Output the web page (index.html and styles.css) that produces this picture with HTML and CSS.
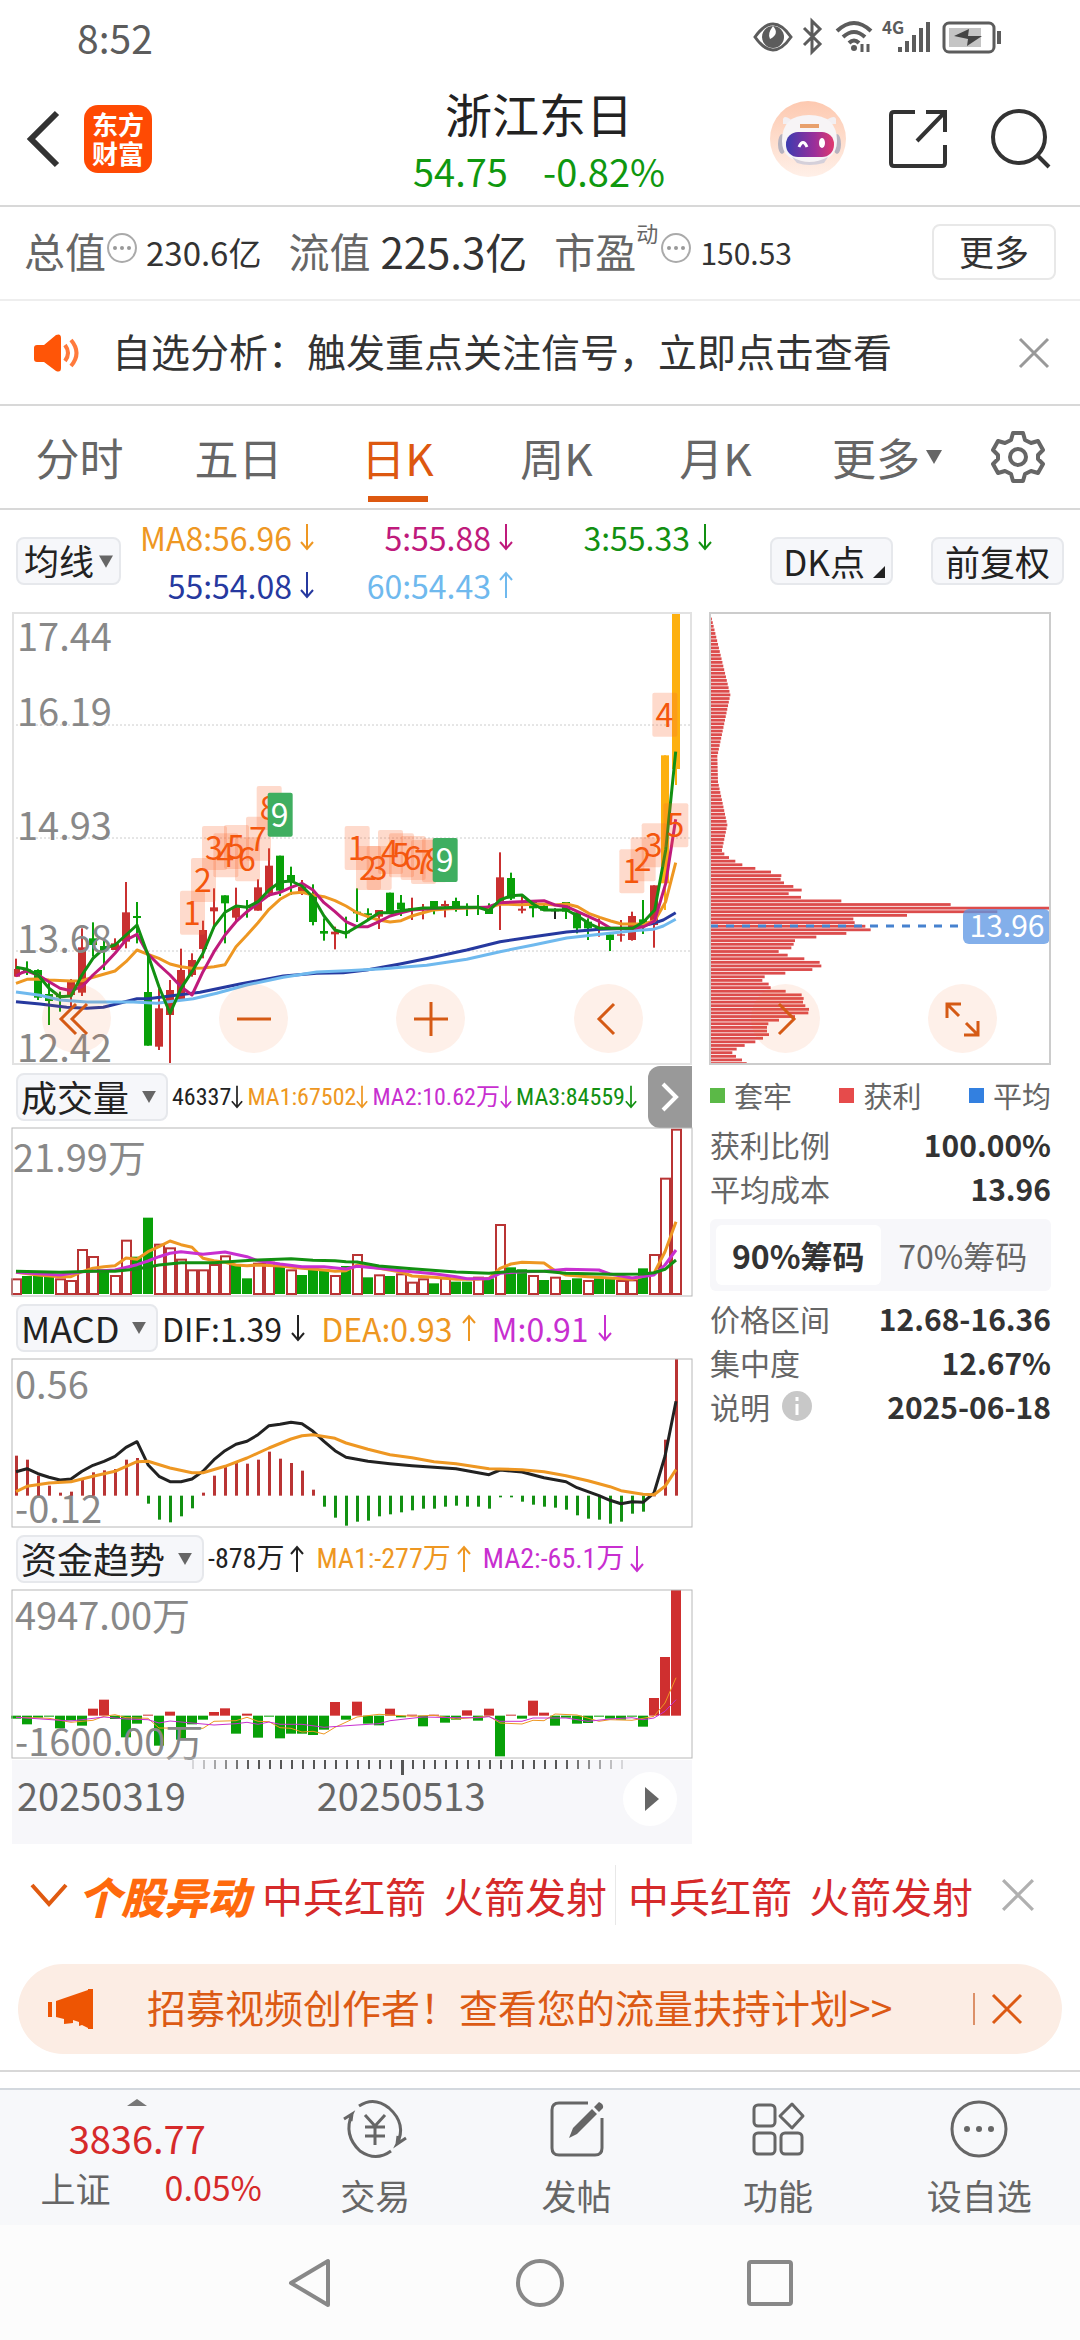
FILE: index.html
```html
<!DOCTYPE html>
<html lang="zh-CN">
<head>
<meta charset="utf-8">
<meta name="viewport" content="width=device-width">
<title>浙江东日</title>
<link rel="stylesheet" href="styles.css">
</head>
<body>
<svg class="defs" aria-hidden="true">
  <symbol id="down" viewBox="0 0 14 28"><path d="M7 1V26M1 19L7 26L13 19" fill="none" stroke="currentColor" stroke-width="2"/></symbol>
  <symbol id="up" viewBox="0 0 14 28"><path d="M7 27V2M1 9L7 2L13 9" fill="none" stroke="currentColor" stroke-width="2"/></symbol>
  <symbol id="cross" viewBox="0 0 32 32"><path d="M2 2L30 30M30 2L2 30" fill="none" stroke="currentColor" stroke-width="3"/></symbol>
  <symbol id="caret" viewBox="0 0 16 14"><path d="M0 0H16L8 14Z" fill="#666"/></symbol>
  <symbol id="more-dots" viewBox="0 0 32 32"><circle cx="16" cy="16" r="14" fill="none" stroke="#aaa" stroke-width="2"/><circle cx="9" cy="16" r="2" fill="#999"/><circle cx="16" cy="16" r="2" fill="#999"/><circle cx="23" cy="16" r="2" fill="#999"/></symbol>
</svg>

<div class="status">
  <span class="clock">8:52</span>
  <svg class="status-icons" width="252" height="36" viewBox="0 0 252 36">
    <g fill="none" stroke="#5c5c5c" stroke-width="3">
      <path d="M2 18Q20 -8 38 18Q20 44 2 18Z"/>
      <path d="M51 9L67 25L59 33V2L67 10L51 26"/>
      <path d="M84 12Q101 -4 118 12M90 18Q101 8 112 18M96 24Q101 19 106 24" stroke-width="4"/>
      <rect x="191" y="4" width="50" height="29" rx="5"/>
      <path d="M246 12V25" stroke-width="4"/>
    </g>
    <circle cx="20" cy="18" r="11" fill="#5c5c5c"/><path d="M20 7Q27 15 17 20Q14 15 20 7Z" fill="#fff"/>
    <circle cx="101" cy="29" r="3" fill="#5c5c5c"/><path d="M109 25V33M115 25V33" stroke="#5c5c5c" stroke-width="3"/>
    <text x="129" y="15" font-size="17" font-weight="700" fill="#5c5c5c">4G</text>
    <path d="M147 33V28M154 33V22M161 33V16M168 33V9M175 33V3" stroke="#5c5c5c" stroke-width="4"/>
    <rect x="196" y="9" width="32" height="19" fill="#c4c4c4"/><path d="M201 17L216 10L215 17H229L214 27L215 20Z" fill="#444"/>
  </svg>
</div>

<header class="header">
  <div class="side">
    <button class="plain" aria-label="返回"><svg width="34" height="58" viewBox="0 0 34 58"><path d="M31 3L5 29L31 55" fill="none" stroke="#333" stroke-width="6"/></svg></button>
    <a class="logo" href="#"><span>东方</span><span>财富</span></a>
  </div>
  <div class="title">
    <h1>浙江东日</h1>
    <p class="quote"><span>54.75</span><span>-0.82%</span></p>
  </div>
  <div class="side tools">
    <button class="plain" aria-label="助手"><svg width="76" height="76" viewBox="0 0 76 76">
      <defs>
        <linearGradient id="peach" x2="0" y2="1"><stop offset="0" stop-color="#fdc9b0"/><stop offset="1" stop-color="#fff0e8"/></linearGradient>
        <linearGradient id="visor"><stop offset="0" stop-color="#3c3bb0"/><stop offset=".6" stop-color="#9b2f9a"/><stop offset="1" stop-color="#e03a6e"/></linearGradient>
      </defs>
      <circle cx="38" cy="38" r="38" fill="url(#peach)"/>
      <path d="M13 18Q14 14 20 18L26 23H13Z" fill="#f3eff2"/><path d="M66 18Q65 14 58 18L52 23H66Z" fill="#f3eff2"/>
      <ellipse cx="12" cy="43" rx="4" ry="10" fill="#b7b3bf"/><ellipse cx="67" cy="43" rx="4" ry="10" fill="#b7b3bf"/>
      <path d="M12 40Q12 14 39 14Q67 14 67 40Q67 61 39 61Q12 61 12 40Z" fill="#f7f4f6"/>
      <path d="M22 56Q39 66 58 56L54 62Q39 66 27 62Z" fill="#d5d0da"/>
      <path d="M30 25H49" stroke="#e8a06c" stroke-width="4"/>
      <rect x="16" y="31" width="48" height="25" rx="12" fill="url(#visor)"/>
      <path d="M29 46Q33 37 37 46" fill="none" stroke="#fff" stroke-width="3"/><ellipse cx="52" cy="42" rx="3" ry="5" fill="#fff"/>
    </svg></button>
    <button class="plain" aria-label="分享"><svg width="60" height="60" viewBox="0 0 60 60"><path d="M27 3H6Q3 3 3 6V54Q3 57 6 57H54Q57 57 57 54V36M38 3H57V23M57 3L29 32" fill="none" stroke="#333" stroke-width="4"/></svg></button>
    <button class="plain" aria-label="搜索"><svg width="62" height="62" viewBox="0 0 62 62"><circle cx="29" cy="29" r="26" fill="none" stroke="#333" stroke-width="4"/><path d="M47 47L59 59" stroke="#333" stroke-width="4"/></svg></button>
  </div>
</header>

<section class="metrics">
  <span class="key">总值</span><svg class="dots" width="32" height="32"><use href="#more-dots"/></svg><span class="val">230.6亿</span>
  <span class="key second">流值</span><span class="val big">225.3亿</span>
  <span class="key third">市盈</span><sup>动</sup><svg class="dots" width="32" height="32"><use href="#more-dots"/></svg><span class="val pe">150.53</span>
  <button class="more">更多</button>
</section>

<section class="notice">
  <svg width="46" height="38" viewBox="0 0 46 38"><path d="M3 11H10L22 1Q27 -1 27 4V34Q27 39 22 37L10 28H3Q0 28 0 25V14Q0 11 3 11Z" fill="#ff5507"/><path d="M31 11Q37 19 31 27M37 6Q48 19 37 32" fill="none" stroke="#ff7a3c" stroke-width="4"/></svg>
  <p>自选分析：触发重点关注信号，立即点击查看</p>
  <button class="plain" aria-label="关闭提示"><svg width="32" height="32"><use href="#cross"/></svg></button>
</section>

<nav class="tabs">
  <button>分时</button><button>五日</button><button class="active">日K</button><button>周K</button><button>月K</button>
  <button>更多<svg width="16" height="14"><use href="#caret"/></svg></button>
  <button class="gear" aria-label="设置"><svg width="54" height="54" viewBox="0 0 54 54"><path d="M22 3H32L34 10L40 13L47 11L52 20L47 25V29L52 34L47 43L40 41L34 44L32 51H22L20 44L14 41L7 43L2 34L7 29V25L2 20L7 11L14 13L20 10Z" fill="none" stroke="#666" stroke-width="4" stroke-linejoin="round"/><circle cx="27" cy="27" r="8" fill="none" stroke="#666" stroke-width="4"/></svg></button>
</nav>

<section class="legend">
  <span class="pick"><select aria-label="主图指标"><option>均线</option></select><svg width="14" height="13"><use href="#caret"/></svg></span>
  <div class="averages">
    <span class="orange">MA8:56.96<svg class="arrow"><use href="#down"/></svg></span>
    <span class="pink">5:55.88<svg class="arrow"><use href="#down"/></svg></span>
    <span class="green">3:55.33<svg class="arrow"><use href="#down"/></svg></span>
    <span class="navy">55:54.08<svg class="arrow"><use href="#down"/></svg></span>
    <span class="sky">60:54.43<svg class="arrow"><use href="#up"/></svg></span>
  </div>
  <button class="chip">DK点<svg width="12" height="12" viewBox="0 0 12 12"><path d="M12 0V12H0Z" fill="#222"/></svg></button>
  <button class="chip">前复权</button>
</section>

<main class="board">
  <svg class="plot" id="kline" viewBox="0 0 680 453">
    <g stroke="#ccc" stroke-width="1" stroke-dasharray="2 2"><path d="M0 113H680M0 226H680M0 339H680"/></g>
    <g id="kline-data"></g>
    <g class="axis"><text x="5" y="39">17.44</text><text x="5" y="114">16.19</text><text x="5" y="228">14.93</text><text x="5" y="341">13.68</text><text x="5" y="450">12.42</text></g>
    <rect class="frame" x="1" y="1" width="678" height="451"/>
  </svg>
  <svg class="plot" id="chips" viewBox="0 0 341 453">
    <g id="chips-data"></g>
    <path d="M0 314H249" stroke="#4682cf" stroke-width="3" stroke-dasharray="8 8"/>
    <rect x="253" y="297" width="87" height="35" rx="6" fill="#5c96e4" opacity=".76"/>
    <text x="297" y="325" text-anchor="middle" font-size="30" fill="#fff">13.96</text>
    <path d="M0 1H340V452H0Z" fill="none" stroke="#ccc" stroke-width="2"/>
  </svg>
  <div class="controls">
    <button aria-label="最左"><svg width="40" height="40" viewBox="0 0 40 40"><path d="M19 5L4 20L19 35M30 5L15 20L30 35"/></svg></button>
    <button aria-label="缩小"><svg width="40" height="40" viewBox="0 0 40 40"><path d="M3 20H37"/></svg></button>
    <button aria-label="放大"><svg width="40" height="40" viewBox="0 0 40 40"><path d="M3 20H37M20 3V37"/></svg></button>
    <button aria-label="左移"><svg width="40" height="40" viewBox="0 0 40 40"><path d="M26 5L11 20L26 35"/></svg></button>
    <button aria-label="右移"><svg width="40" height="40" viewBox="0 0 40 40"><path d="M14 5L29 20L14 35"/></svg></button>
    <button aria-label="全屏"><svg width="40" height="40" viewBox="0 0 40 40"><path d="M5 19V5H19M5 5L17 17M36 22V36H22M36 36L24 24"/></svg></button>
  </div>

  <div class="left">
    <div class="row">
      <span class="pick wide"><select aria-label="副图一"><option>成交量</option></select><svg width="14" height="12"><use href="#caret"/></svg></span>
      <div class="readout tight">
        <span>46337<svg class="arrow"><use href="#down"/></svg></span>
        <span class="orange">MA1:67502<svg class="arrow"><use href="#down"/></svg></span>
        <span class="violet">MA2:10.62万<svg class="arrow"><use href="#down"/></svg></span>
        <span class="green">MA3:84559<svg class="arrow"><use href="#down"/></svg></span>
      </div>
      <button class="next" aria-label="下一个"><svg width="20" height="30" viewBox="0 0 20 30"><path d="M3 2L16 15L3 28" fill="none" stroke="#fff" stroke-width="4"/></svg></button>
    </div>
    <svg class="plot" viewBox="0 0 680 168">
      <g id="volume-data"></g>
      <g class="axis"><text x="1" y="44">21.99万</text></g>
      <rect class="frame thin" x="0" y="0" width="680" height="168"/>
    </svg>
    <div class="row">
      <span class="pick wide"><select aria-label="副图二"><option>MACD</option></select><svg width="14" height="12"><use href="#caret"/></svg></span>
      <div class="readout roomy">
        <span>DIF:1.39<svg class="arrow"><use href="#down"/></svg></span>
        <span class="orange">DEA:0.93<svg class="arrow"><use href="#up"/></svg></span>
        <span class="violet">M:0.91<svg class="arrow"><use href="#down"/></svg></span>
      </div>
    </div>
    <svg class="plot" viewBox="0 0 680 168">
      <g class="axis"><text x="3" y="40">0.56</text><text x="3" y="164">-0.12</text></g>
      <g id="macd-data"></g>
      <rect class="frame thin" x="0" y="0" width="680" height="168"/>
    </svg>
    <div class="row">
      <span class="pick wide"><select aria-label="副图三"><option>资金趋势</option></select><svg width="14" height="12"><use href="#caret"/></svg></span>
      <div class="readout middle">
        <span>-878万<svg class="arrow"><use href="#up"/></svg></span>
        <span class="orange">MA1:-277万<svg class="arrow"><use href="#up"/></svg></span>
        <span class="violet">MA2:-65.1万<svg class="arrow"><use href="#down"/></svg></span>
      </div>
    </div>
    <svg class="plot" viewBox="0 0 680 168">
      <g id="fund-data"></g>
      <g class="axis"><text x="3" y="40">4947.00万</text><text x="3" y="166">-1600.00万</text></g>
      <rect class="frame thin" x="0" y="0" width="680" height="168"/>
    </svg>
    <div class="timeline">
      <svg class="plot" viewBox="0 0 680 16"><g id="ticks"></g></svg>
      <div class="dates">
        <span>20250319</span><span>20250513</span>
        <button aria-label="播放"><svg width="14" height="24" viewBox="0 0 14 24"><path d="M0 0L14 12L0 24Z" fill="#666"/></svg></button>
      </div>
    </div>
  </div>

  <aside class="stats">
    <div class="key-row"><span><i class="dot green-bg"></i>套牢</span><span><i class="dot red-bg"></i>获利</span><span><i class="dot blue-bg"></i>平均</span></div>
    <dl>
      <div><dt>获利比例</dt><dd>100.00%</dd></div>
      <div><dt>平均成本</dt><dd>13.96</dd></div>
    </dl>
    <div class="segment"><button class="on">90%筹码</button><button>70%筹码</button></div>
    <dl>
      <div><dt>价格区间</dt><dd>12.68-16.36</dd></div>
      <div><dt>集中度</dt><dd>12.67%</dd></div>
      <div><dt>说明<svg width="30" height="30" viewBox="0 0 30 30"><circle cx="15" cy="15" r="15" fill="#c8c8c8"/><path d="M15 6V10M15 13V24" stroke="#fff" stroke-width="3"/></svg></dt><dd>2025-06-18</dd></div>
    </dl>
  </aside>
</main>

<section class="ticker">
  <button class="plain" aria-label="展开"><svg width="38" height="26" viewBox="0 0 38 26"><path d="M2 3L19 22L36 3" fill="none" stroke="#e05a10" stroke-width="4"/></svg></button>
  <strong>个股异动</strong>
  <a href="#"><span>中兵红箭</span><span>火箭发射</span></a>
  <a href="#"><span>中兵红箭</span><span>火箭发射</span></a>
  <button class="plain shut" aria-label="关闭异动"><svg width="34" height="34"><use href="#cross"/></svg></button>
</section>

<section class="banner">
  <svg width="46" height="40" viewBox="0 0 46 40"><path d="M0 13H4V28H0ZM8 12L40 1V0H45V40H40V39L34 36L31 37V33L25 31V34L16 35V30L8 28Z" fill="#ee5503"/></svg>
  <a href="#">招募视频创作者！查看您的流量扶持计划&gt;&gt;</a>
  <button class="plain" aria-label="关闭广告"><svg width="32" height="32"><use href="#cross"/></svg></button>
</section>

<nav class="bottom">
  <a class="index" href="#">
    <svg width="20" height="7" viewBox="0 0 20 7"><path d="M0 7L10 0L20 7Z" fill="#777"/></svg>
    <span class="points">3836.77</span>
    <span class="pair"><span>上证</span><b>0.05%</b></span>
  </a>
  <a href="#"><svg width="66" height="60" viewBox="0 0 66 60"><g fill="none" stroke="#666" stroke-width="3"><path d="M17 7Q32 -3 47 9Q65 25 55 45L64 39M55 45L56 37M49 52Q34 63 18 52Q1 36 10 15L2 20M10 15L9 22"/><path d="M23 16L33 27L43 16M33 27V46M23 28H43M23 37H43"/></g></svg>交易</a>
  <a href="#"><svg width="56" height="58" viewBox="0 0 56 58"><path d="M39 3H10Q3 3 3 10V48Q3 55 10 55H46Q53 55 53 48V18" fill="none" stroke="#666" stroke-width="3"/><path d="M20 38L24 28L43 9L48 14L28 34ZM45 7L50 2Q55 4 54 8L50 12Z" fill="#666"/></svg>发帖</a>
  <a href="#"><svg width="54" height="56" viewBox="0 0 54 56"><g fill="none" stroke="#666" stroke-width="3"><rect x="3" y="4" width="21" height="21" rx="4"/><rect x="3" y="32" width="21" height="21" rx="4"/><rect x="30" y="32" width="21" height="21" rx="4"/><path d="M41 3L52 15L41 27L29 15Z" stroke-linejoin="round"/></g></svg>功能</a>
  <a href="#"><svg width="58" height="58" viewBox="0 0 58 58"><circle cx="29" cy="29" r="27" fill="none" stroke="#666" stroke-width="3"/><circle cx="17" cy="29" r="3" fill="#666"/><circle cx="29" cy="29" r="3" fill="#666"/><circle cx="41" cy="29" r="3" fill="#666"/></svg>设自选</a>
</nav>

<div class="system">
  <button class="plain" aria-label="后退"><svg width="50" height="54" viewBox="0 0 50 54"><path d="M43 5V49L6 27Z" fill="none" stroke="#888" stroke-width="4" stroke-linejoin="round"/></svg></button>
  <button class="plain" aria-label="主屏"><svg width="50" height="50" viewBox="0 0 50 50"><circle cx="25" cy="25" r="22" fill="none" stroke="#888" stroke-width="4"/></svg></button>
  <button class="plain" aria-label="任务"><svg width="50" height="50" viewBox="0 0 50 50"><rect x="4" y="4" width="42" height="42" rx="2" fill="none" stroke="#888" stroke-width="4"/></svg></button>
</div>
<script src="charts.js"></script>
</body>
</html>
```
FILE: styles.css
```css
* { box-sizing: border-box; }
body { margin: 0; background: #fff; color: #333; font-family: "Noto Sans CJK SC", sans-serif; font-size: 32px; line-height: 1; }
button, select { font: inherit; color: inherit; border: 0; padding: 0; margin: 0; background: none; }
a { color: inherit; text-decoration: none; }
h1, p, dl, dd { margin: 0; }
svg { display: block; flex: none; overflow: visible; }
.defs { width: 0; height: 0; position: absolute; }
.arrow { width: 14px; height: 28px; }
.orange { color: #ee9722; }
.pink { color: #bf1a7c; }
.green { color: #129012; }
.navy { color: #26399f; }
.sky { color: #6fb9ee; }
.violet { color: #c82fd0; }

.status { display: flex; align-items: center; justify-content: space-between; height: 72px; padding: 2px 75px 0 77px; }
.clock { font-size: 39px; color: #5c5c5c; }

.header { display: grid; grid-template-columns: 1fr auto 1fr; align-items: center; height: 135px; border-bottom: 2px solid #d8d8d8; padding: 0 28px 0 26px; }
.side { display: flex; align-items: center; gap: 24px; }
.tools { justify-content: flex-end; gap: 42px; }
.logo { display: grid; align-content: center; justify-items: center; gap: 3px; width: 68px; height: 68px; border-radius: 14px; background: #ff4a03; color: #fff; font-size: 26px; font-weight: 700; }
.title { display: grid; justify-items: center; gap: 16px; padding-top: 2px; }
.title h1 { font-size: 47px; font-weight: 400; color: #222; }
.quote { display: flex; gap: 35px; font-size: 38px; font-weight: 400; color: #0f980f; }

.metrics { display: flex; align-items: center; height: 94px; border-bottom: 2px solid #eee; padding: 0 24px 2px; }
.key { font-size: 41px; line-height: 46px; padding-bottom: 4px; color: #666; }
.dots { margin-bottom: 8px; }
.val { font-size: 33px; margin-left: 8px; }
.big { font-size: 42px; line-height: 46px; padding-bottom: 2px; margin-left: 10px; }
.pe { font-size: 30px; }
.second, .third { margin-left: 27px; }
.metrics sup { font-size: 22px; color: #666; align-self: flex-start; margin-top: 14px; }
.metrics sup + .dots { margin-left: 2px; }
.more { margin-left: auto; width: 124px; height: 56px; border: 2px solid #e8e8e8; border-radius: 8px; font-size: 35px; padding-bottom: 4px; }

.notice { display: flex; align-items: center; height: 105px; border-bottom: 2px solid #d8d8d8; padding: 0 30px 0 34px; }
.notice p { flex: 1; margin-left: 32px; padding-bottom: 5px; font-size: 39px; }
.notice button { color: #999; }

.tabs { display: grid; grid-template-columns: repeat(5, 159fr) 184fr 101fr; height: 104px; border-bottom: 2px solid #d8d8d8; font-size: 44px; color: #666; }
.tabs button { display: flex; align-items: center; justify-content: center; gap: 6px; border-top: 12px solid transparent; border-bottom: 6px solid transparent; margin-bottom: 6px; }
.tabs .active { color: #dd5810; background: linear-gradient(#dd5810, #dd5810) center bottom / 60px 6px no-repeat border-box; }
.tabs .gear { justify-content: flex-start; padding-left: 12px; }

.legend { display: flex; align-items: center; height: 102px; padding: 0 16px; }
.pick { display: grid; align-items: center; flex: none; height: 48px; border: 2px solid #e6e8ec; border-radius: 8px; background: #f6f7fa; color: #222; font-size: 35px; }
.pick select, .pick svg { grid-area: 1 / 1; }
.pick select { appearance: none; padding: 0 24px 2px 6px; line-height: 42px; }
.pick svg { justify-self: end; margin-right: 6px; pointer-events: none; }
.wide select { padding: 0 36px 2px 3px; }
.wide svg { margin-right: 10px; }
.averages { display: grid; grid-template-columns: repeat(3, 199px); flex: 1; justify-items: end; justify-content: start; line-height: 48px; margin-left: -6px; }
.averages span { display: flex; align-items: center; gap: 8px; }
.chip { display: flex; align-items: flex-end; justify-content: center; gap: 8px; height: 48px; padding: 5px 6px 5px 11px; border: 2px solid #e6e8ec; border-radius: 8px; background: #f6f7fa; color: #222; font-size: 35px; line-height: 34px; margin-left: 38px; }
.chip:last-child { padding: 5px 12px; }

.board { display: grid; grid-template-columns: 680fr 341fr; column-gap: 18px; padding: 0 29px 0 12px; }
.plot { width: 100%; height: auto; }
.plot text { font-family: inherit; }
.axis { font-size: 38px; fill: #888; }
.frame { fill: none; stroke: #e2e2e2; stroke-width: 2; }
.thin { stroke: #b8b8b8; stroke-width: 1; }
.badge { font-size: 32px; text-anchor: middle; fill: #f4560c; }
.badge-done { fill: #fff; }
#kline { grid-area: 1 / 1; }
#chips { grid-area: 1 / 2; }
.controls { grid-area: 1 / 1 / 2 / 3; align-self: end; z-index: 1; display: flex; justify-content: space-between; margin: 0 54px 12px 30px; }
.controls button { display: grid; place-items: center; width: 69px; height: 69px; border-radius: 50%; background: rgba(250, 110, 40, 0.1); }
.controls path { fill: none; stroke: #d55a15; stroke-width: 3; }

.row { display: flex; align-items: center; height: 63px; padding-left: 4px; }
.row .pick { font-size: 36px; }
.readout { display: flex; color: #222; }
.readout span { display: flex; align-items: center; white-space: nowrap; }
.tight { flex: 1; justify-content: space-between; font-family: "Roboto Condensed", "Noto Sans CJK SC", sans-serif; font-size: 24px; padding: 0 11px 0 4px; }
.tight .arrow { width: 12px; }
.roomy { font-size: 32px; gap: 16px; padding-left: 4px; }
.roomy span { gap: 9px; }
.middle { font-family: "Roboto Condensed", "Noto Sans CJK SC", sans-serif; font-size: 28px; gap: 12px; padding-left: 4px; }
.middle span { gap: 6px; }
.next { display: grid; place-items: center; flex: none; width: 44px; height: 62px; border-radius: 12px 0 0 12px; background: #999; }

.timeline { margin-top: 2px; height: 84px; background: #f7f7fa; }
.dates { display: grid; grid-template-columns: 302fr 294fr 84fr; align-items: center; font-size: 38px; color: #666; padding-left: 5px; }
.dates span { padding-bottom: 15px; }
.dates button { display: grid; place-items: center; justify-self: center; width: 54px; height: 54px; margin-top: -8px; border-radius: 50%; background: #fff; padding-left: 4px; }

.stats { color: #666; font-size: 30px; padding-top: 8px; }
.key-row { display: flex; justify-content: space-between; line-height: 44px; }
.key-row span { display: flex; align-items: center; gap: 9px; font-size: 29px; }
.dot { width: 15px; height: 15px; }
.green-bg { background: #5bb947; }
.red-bg { background: #e64b4b; }
.blue-bg { background: #3380e0; }
.stats dl { padding: 5px 0 9px; line-height: 44px; }
.stats dl div { display: flex; justify-content: space-between; }
.stats dt { display: flex; align-items: center; gap: 12px; }
.stats dd { color: #333; font-weight: 700; }
.segment { display: grid; grid-template-columns: 1fr 1fr; height: 72px; padding: 6px; border-radius: 6px; background: #f7f7fa; font-size: 32px; }
.segment .on { background: #fff; border-radius: 6px; color: #333; font-weight: 700; }

.ticker { display: flex; align-items: center; height: 102px; padding: 0 45px 0 30px; font-size: 41px; color: #d62a2a; }
.ticker strong { margin: 0 12px 0 10px; font-size: 43px; font-weight: 900; font-style: italic; color: #ff6a0d; }
.ticker a { display: flex; gap: 17px; line-height: 60px; white-space: nowrap; }
.ticker a + a { border-left: 1px solid #e8e8e8; margin-left: 8px; padding-left: 12px; }
.shut { margin-left: auto; color: #b0b0b0; }

.banner { display: flex; align-items: center; height: 90px; margin: 18px 18px 17px; padding: 0 39px 0 30px; border-radius: 45px; background: #fcede4; color: #dc5a14; }
.banner a { flex: 1; margin-left: 53px; padding-bottom: 5px; font-size: 39px; }
.banner button { border-left: 2px solid #dc9068; padding-left: 16px; }

.bottom { display: grid; grid-template-columns: 274fr repeat(4, 201fr); height: 137px; margin-top: 34px; border-top: 2px solid #d3d8de; box-shadow: 0 -16px #fff, 0 -18px #d8d8d8; background: #f7f8fa; color: #666; font-size: 35px; }
.bottom a { display: grid; justify-items: center; align-content: center; grid-template-rows: 60px 35px; gap: 18px; align-items: center; padding-bottom: 5px; }
.bottom .index { grid-template-rows: 7px 38px 35px; gap: 13px; align-content: start; padding: 9px 0 0; }
.points { font-size: 38px; color: #d62a2a; }
.pair { display: flex; gap: 54px; padding-left: 28px; }
.pair b { font-weight: 400; color: #d62a2a; font-size: 34px; }

.system { display: flex; align-items: center; justify-content: center; gap: 180px; height: 116px; background: #fcfcfc; }
```
FILE: charts.js
```js
// All plots share one time axis: 61 sessions, 11 units apart.
const NS = 'http://www.w3.org/2000/svg';
const RED = '#c93030', GREEN = '#08a008', GOLD = '#fdb010';
const sx = i => 4 + 11 * i;

function add(id, tag, attrs, text) {
  const el = document.createElementNS(NS, tag);
  for (const k in attrs) el.setAttribute(k, attrs[k]);
  if (text) el.textContent = text;
  document.getElementById(id).appendChild(el);
}
function bar(id, x, y, w, h, fill) {
  add(id, 'rect', { x, y, width: w, height: Math.max(h, 1), fill });
}
function line(id, pts, color, width, fx, fy) {
  const n = pts.split(/[ ,]+/).map(Number), out = [];
  for (let i = 0; i < n.length; i += 2) out.push(fx(n[i]).toFixed(1) + ',' + fy(n[i + 1]).toFixed(1));
  add(id, 'polyline', { points: out.join(' '), fill: 'none', stroke: color, 'stroke-width': width, 'stroke-linejoin': 'round' });
}

// Candles: colour, body top, body bottom, high, low (third-unit grid).
const k = v => (v - 36) / 3;
const candles = `r 1107 1130 1076 1130|g 1108 1114 1084 1125|g 1110 1193 1108 1200|g 1182 1203 1145 1275|g 1185 1192 1175 1235|r 1142 1185 1137 1230|r 1042 1178 985 1188|g 1015 1035 967 1070|g 1038 1050 1020 1110|r 1030 1050 1015 1050|r 937 1025 846 1045|g 948 954 906 1030|g 1176 1337 1060 1337|r 1225 1340 1165 1350|r 1170 1245 1140 1395|r 1110 1198 1046 1198|r 1080 1125 1060 1130|r 990 1047 962 1075|r 922 934 865 985|g 886 910 886 1030|r 922 953 863 965|g 918 924 900 953|r 862 932 838 932|r 797 880 745 890|g 767 872 767 888|g 825 845 800 885|r 860 880 840 885|g 888 966 853 976|g 993 1001 955 1022|r 995 1003 980 1048|g 994 1000 950 1015|g 935 940 865 966|g 940 946 925 960|r 930 950 930 987|g 878 942 878 942|g 908 928 885 948|r 925 932 893 960|r 925 930 912 958|g 903 925 903 943|r 912 918 902 952|g 903 922 893 935|g 918 924 910 948|g 920 926 885 945|g 920 942 910 942|r 832 905 757 990|g 834 896 818 900|r 926 932 887 940|g 905 925 905 952|g 918 932 910 932|k 930 934 925 957|g 906 935 906 957|g 937 985 930 1000|g 965 985 955 1020|r 980 990 955 1010|g 1003 1020 1000 1053|r 1003 1007 960 1025|r 948 1020 935 1022|g 958 973 900 1002|r 856 975 856 1043|y 466 850 466 930|y 38 507 38 555`;
candles.split('|').forEach((s, i) => {
  const [c, t, b, h, l] = s.split(' ');
  const fill = { r: RED, g: GREEN, k: '#222', y: GOLD }[c];
  bar('kline-data', sx(i) - 1, k(+h), 2, (l - h) / 3, fill);
  bar('kline-data', sx(i) - 4, k(+t), 8, (b - t) / 3, fill);
});
const kl = (p, c) => line('kline-data', p, c, 3, k, k);
kl('48,1205 120,1212 200,1222 260,1225 310,1222 411,1196 444,1196 510,1188 600,1177 720,1152 850,1128 950,1120 1030,1118 1100,1110 1200,1092 1300,1072 1400,1050 1500,1025 1600,1010 1700,996 1800,988 1900,985 1960,970 1990,960 2027,938', '#26399f');
kl('48,1176 120,1186 180,1200 260,1206 400,1206 470,1210 580,1196 650,1180 740,1155 850,1132 950,1116 1040,1112 1150,1106 1280,1096 1400,1078 1500,1055 1600,1035 1700,1014 1800,1003 1900,992 1960,988 1990,978 2027,958', '#6fb9ee');
kl('48,1150 81,1138 114,1137 147,1140 213,1143 246,1142 279,1132 345,1113 378,1085 411,1050 444,1063 477,1075 510,1092 543,1100 576,1105 609,1104 642,1100 675,1094 708,1040 741,1005 774,968 807,928 840,898 873,880 906,877 939,885 972,890 1005,902 1038,918 1071,938 1104,950 1137,960 1170,966 1203,962 1236,948 1269,938 1300,930 1350,926 1470,922 1500,912 1560,914 1632,912 1665,915 1700,912 1733,920 1766,940 1799,952 1832,963 1865,972 1898,972 1931,972 1964,962 1997,905 2027,788', '#ee9722');
kl('48,1128 65,1118 81,1113 114,1125 147,1145 180,1165 213,1172 246,1160 279,1125 312,1095 345,1060 378,1020 411,1003 444,1062 477,1095 510,1125 543,1160 576,1185 609,1115 642,1055 675,1005 708,965 741,935 774,910 807,885 840,877 873,862 906,850 939,870 972,908 1005,935 1038,965 1071,980 1104,980 1137,965 1170,948 1203,938 1236,930 1269,928 1320,924 1460,922 1500,908 1560,905 1632,902 1665,915 1700,920 1733,935 1766,950 1799,965 1832,985 1898,985 1931,980 1964,962 1997,850 2027,658', '#bf1a7c');
kl('48,1102 81,1108 114,1125 147,1165 180,1190 213,1188 246,1125 279,1075 312,1045 345,1035 378,1005 411,975 444,1065 477,1160 510,1240 543,1165 576,1115 609,1060 642,980 675,937 708,918 741,922 774,905 807,870 840,846 873,843 906,858 939,892 972,948 1005,990 1038,1000 1071,980 1104,960 1137,938 1170,938 1203,932 1269,924 1320,924 1368,922 1434,922 1467,932 1500,900 1533,887 1566,885 1599,912 1632,930 1700,930 1733,948 1766,970 1799,985 1832,985 1898,985 1931,965 1964,930 1997,750 2027,455', '#129012');
[[1,540,872],[2,573,774],[3,606,678],[4,640,700],[5,672,675],[6,705,712],[7,738,650],[8,770,558],[9,803,578],
 [1,1034,678],[2,1068,738],[3,1100,738],[4,1134,690],[5,1167,700],[6,1202,708],[7,1233,720],[8,1266,715],[9,1298,714],
 [1,1858,748],[2,1892,712],[3,1925,670],[4,1957,278],[5,1990,610]].forEach(([n, x, y]) => {
  const done = n === 9;
  add('kline-data', 'rect', { x: k(x), y: k(y), width: 25, height: 44, rx: 2, fill: done ? '#3fae60' : '#fa6428', 'fill-opacity': done ? 1 : 0.24 });
  add('kline-data', 'text', { x: k(x) + 12, y: k(y) + 34, class: done ? 'badge badge-done' : 'badge' }, String(n));
});

// Cost distribution: 125 price levels, top to bottom.
const upper = [[0,3],[22,61],[39,22],[46,24],[58,52],[65,36]];
const lower = [36,43,57,76,97,136,183,214,212,222,250,275,236,273,394,722,1020,862,591,430,434,466,482,409,319,255,251,244,206,233,283,329,334,307,226,164,157,176,182,227,275,281,279,286,297,295,255,207,175,171,171,177,159,136,104,80,67,78,96,110];
for (let i = 0; i < 66; i++) {
  const j = Math.max(1, upper.findIndex(p => p[0] >= i)), [a, u] = upper[j - 1], [b, v] = upper[j];
  bar('chips-data', 0, 2 + i * 3.614, (u + (v - u) * (i - a) / (b - a)) / 3, 2.8, '#dc4c4c');
}
lower.forEach((w, i) => bar('chips-data', 0, 2 + (i + 65) * 3.614, w / 3, 2.8, '#dc4c4c'));

// Volume
const volume = 'r655 g648 g648 g650 r655 r660 r567 r588 g628 r645 r539 g590 g473 r551 r562 r596 r628 r628 r612 r586 g612 g655 r608 r605 g615 r628 g645 g625 g630 r645 g618 r582 g652 r643 g648 r640 r665 r655 g670 r652 g665 g665 r650 g655 r492 g622 g628 r645 g660 r650 g660 g655 r660 g655 g655 r660 r658 g625 r582 r353 r206';
const v = y => (y - 204) / 3;
volume.split(' ').forEach((s, i) => {
  const y = v(+s.slice(1));
  if (s[0] === 'g') bar('volume-data', sx(i) - 5, y, 10, 166 - y, GREEN);
  else add('volume-data', 'rect', { x: sx(i) - 4, y: y + 1, width: 9, height: 165 - y, fill: '#fff', stroke: '#b93434', 'stroke-width': 2 });
});
const vl = (p, c) => line('volume-data', p, c, 3, sx, v);
vl('0,637 2,645 4,650 5,650 6,635 7,625 8,620 9,617 10,594 11,598 12,575 13,560 14,543 15,554 16,562 17,595 18,602 19,607 20,615 21,617 22,615 24,618 26,625 28,630 29,634 30,632 31,615 33,625 35,636 36,648 38,652 40,658 42,658 43,655 44,625 45,612 46,607 48,609 49,632 50,645 52,650 54,654 56,658 58,640 59,575 60,485', '#ee9722');
vl('0,637 4,645 6,635 9,630 11,614 12,603 13,590 14,580 15,575 17,583 19,576 21,590 22,602 24,612 26,620 28,620 30,627 31,619 33,625 36,635 38,641 40,650 41,656 43,656 44,640 46,635 48,634 50,628 53,630 54,642 56,654 58,645 59,615 60,570', '#c82fd0');
vl('0,634 4,637 7,634 9,634 11,627 13,615 15,608 18,608 20,604 22,600 25,596 27,601 29,602 30,605 31,606 33,618 36,626 40,636 43,640 45,634 48,634 50,640 54,643 57,642 58,638 59,628 60,600', '#129012');

// MACD
const m = y => (y - 28) / 3;
[318,330,378,408,429,426,388,368,362,358,330,325,462,510,518,500,476,429,378,348,336,342,330,306,327,340,363,420,471,504,528,516,513,500,494,488,482,477,477,471,468,471,471,477,443,443,456,465,471,474,480,497,507,510,522,516,492,486,437,270,28].forEach((y, i) => {
  bar('macd-data', sx(i) - 1, m(Math.min(y, 438)), 3, Math.abs(y - 438) / 3, y < 438 ? '#b93434' : '#129012');
});
line('macd-data', '0,366 1,357 2,372 3,383 4,391 5,388 6,365 7,347 8,335 9,320 10,293 11,276 12,345 13,380 14,396 15,396 16,388 17,365 18,330 19,303 20,284 21,275 22,255 23,228 24,224 25,218 26,222 27,245 28,275 29,303 30,323 32,335 34,342 36,348 38,353 40,357 42,369 43,375 44,361 46,367 48,384 50,396 51,414 53,438 54,452 55,462 56,456 57,458 58,430 59,320 60,155', '#222', 3, sx, m);
line('macd-data', '0,426 1,410 3,400 5,396 7,380 9,365 11,336 12,335 14,355 16,369 17,369 19,350 21,325 23,295 25,268 26,258 27,255 29,266 30,280 32,299 34,315 36,324 38,336 40,342 43,357 46,360 48,366 50,378 52,393 54,411 55,423 57,434 58,435 59,410 60,360', '#ee9722', 3, sx, m);

// Fund flow
const f = y => (y - 31) / 3;
[417,434,414,411,446,422,438,387,360,418,473,432,405,498,396,480,434,420,397,386,462,402,474,411,476,462,462,466,450,367,420,366,432,437,387,413,405,440,405,429,420,392,423,387,530,405,417,363,399,438,414,432,430,411,417,420,411,441,355,232,31].forEach((y, i) => {
  bar('fund-data', sx(i) - 5, f(Math.min(y, 408)), 10, Math.abs(y - 408) / 3, y < 408 ? '#cf2f2f' : GREEN);
});
line('fund-data', '0,413 3,416 5,428 7,422 8,410 9,405 10,414 12,416 13,445 17,446 18,425 20,423 21,413 22,425 23,426 24,444 25,446 26,457 27,455 28,463 29,443 31,412 33,404 36,410 38,407 40,418 43,410 44,430 46,433 47,422 48,423 49,403 51,406 53,425 54,420 56,422 58,410 59,370 60,294', '#ee9722', 1, sx, f);
line('fund-data', '0,413 5,424 8,412 10,418 12,420 13,430 14,424 16,430 18,436 20,432 21,428 22,434 23,427 24,434 26,434 28,443 31,436 33,432 34,423 37,412 40,414 42,414 43,411 44,425 46,425 47,415 50,415 52,425 54,418 56,414 57,420 58,415 59,395 60,360', '#c82fd0', 1, sx, f);

// Scrubber ticks fade out towards both ends.
for (let i = 0; i < 40; i++) {
  const mid = i === 19;
  add('ticks', 'rect', { x: 180 + i * 11, y: 0, width: mid ? 3 : 2, height: mid ? 15 : 9, fill: '#555', opacity: Math.min(1, 0.2 + Math.min(i, 39 - i) * 0.15) });
}
```
